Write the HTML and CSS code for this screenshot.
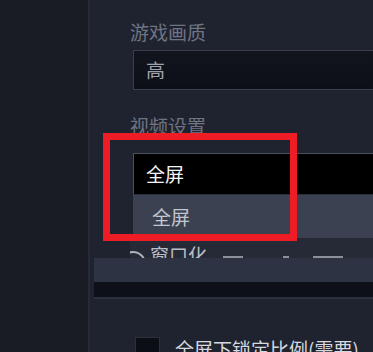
FILE: index.html
```html
<!DOCTYPE html>
<html lang="zh-CN">
<head>
<meta charset="utf-8">
<title>视频设置</title>
<link rel="stylesheet" href="styles.css">
</head>
<body>
<div class="app">
  <aside class="sidebar"></aside>
  <main class="panel">
    <section class="field field-quality">
      <div class="label">游戏画质</div>
      <div class="select">高</div>
    </section>
    <section class="field field-video">
      <div class="label">视频设置</div>
      <div class="select select-open">全屏</div>
      <ul class="options">
        <li class="opt opt-active">全屏</li>
        <li class="opt opt-cut"><span class="radio"></span><span class="opt-text">窗口化</span><span class="ghost g1"></span><span class="ghost g2"></span><span class="ghost g3"></span></li>
      </ul>
      <div class="highlight"></div>
    </section>
    <div class="bar"></div>
    <div class="bar-dark"></div>
    <div class="check-row">
      <span class="checkbox"></span>
      <span class="check-text">全屏下锁定比例(需要)</span>
    </div>
  </main>
</div>
</body>
</html>
```

FILE: styles.css
```css
* { box-sizing: border-box; }
html, body {
  margin: 0;
  padding: 0;
  width: 373px;
  height: 352px;
  overflow: hidden;
  background: #1f2330;
  font-family: "Noto Sans CJK SC", "Noto Sans", sans-serif;
}
.app {
  display: flex;
  width: 373px;
  height: 352px;
  overflow: hidden;
}
.sidebar {
  width: 90px;
  flex: none;
  background: #191c25;
  border-right: 2px solid #262a36;
}
.panel {
  flex: 1;
  display: flex;
  flex-direction: column;
  padding-top: 20px;
  min-width: 0;
}
.panel > * {
  flex-shrink: 0;
}
.field {
  padding-left: 40px;
}
.label {
  font-size: 19px;
  line-height: 24px;
  height: 24px;
  color: #6f7482;
}
.select {
  margin-left: 3px;
  margin-right: -10px;
  height: 40px;
  margin-top: 6px;
  border: 1px solid #3a3f4c;
  background: linear-gradient(#12151e, #0c0f17);
  color: #9ea2ad;
  font-size: 19px;
  line-height: 38px;
  padding-left: 12px;
}
.field-video {
  position: relative;
  margin-top: 24px;
}
.select-open {
  margin-top: 15px;
  height: 42px;
  line-height: 40px;
  background: #000;
  border: 1px solid #4a4f5c;
  border-bottom-color: #2b2f3b;
  color: #f4f5f7;
}
.options {
  list-style: none;
  margin: 0 -10px 0 3px;
  padding: 0;
}
.opt {
  font-size: 19px;
  color: #c2c6cf;
}
.opt-active {
  height: 43px;
  line-height: 44px;
  padding-left: 19px;
  background: #3c4151;
}
.opt-cut {
  position: relative;
  height: 20px;
  overflow: hidden;
  background: #262a37;
  display: flex;
  align-items: flex-start;
  padding-left: 17px;
  line-height: 24px;
  margin-left: -3px;
  padding-top: 5px;
  color: #b9bdc6;
}
.radio {
  position: absolute;
  left: -10px;
  top: 13px;
  width: 26px;
  height: 26px;
  border: 2px solid #aeb2bb;
  border-radius: 50%;
}
.opt-text { margin-left: 3px; }
.ghost {
  position: absolute;
  top: 18px;
  height: 3px;
  background: #8c909a;
}
.g1 { left: 93px; width: 20px; }
.g2 { left: 153px; width: 6px; }
.g3 { left: 183px; width: 30px; }
.highlight {
  position: absolute;
  left: 13px;
  top: 19px;
  width: 194px;
  height: 108px;
  border: 7px solid #ee1c25;
}
.bar {
  margin-left: 4px;
  height: 24px;
  background: #2e3343;
}
.bar-dark {
  margin-left: 4px;
  height: 17px;
  background: #0d1019;
  border-bottom: 2px solid #2b303c;
}
.check-row {
  display: flex;
  align-items: flex-start;
  margin-top: 38px;
  padding-left: 45px;
}
.checkbox {
  width: 25px;
  height: 24px;
  background: #0c0e15;
  border: 1px solid #2c303c;
  flex: none;
}
.check-text {
  margin-left: 15px;
  font-size: 19px;
  line-height: 24px;
  color: #d6d9df;
}
```
